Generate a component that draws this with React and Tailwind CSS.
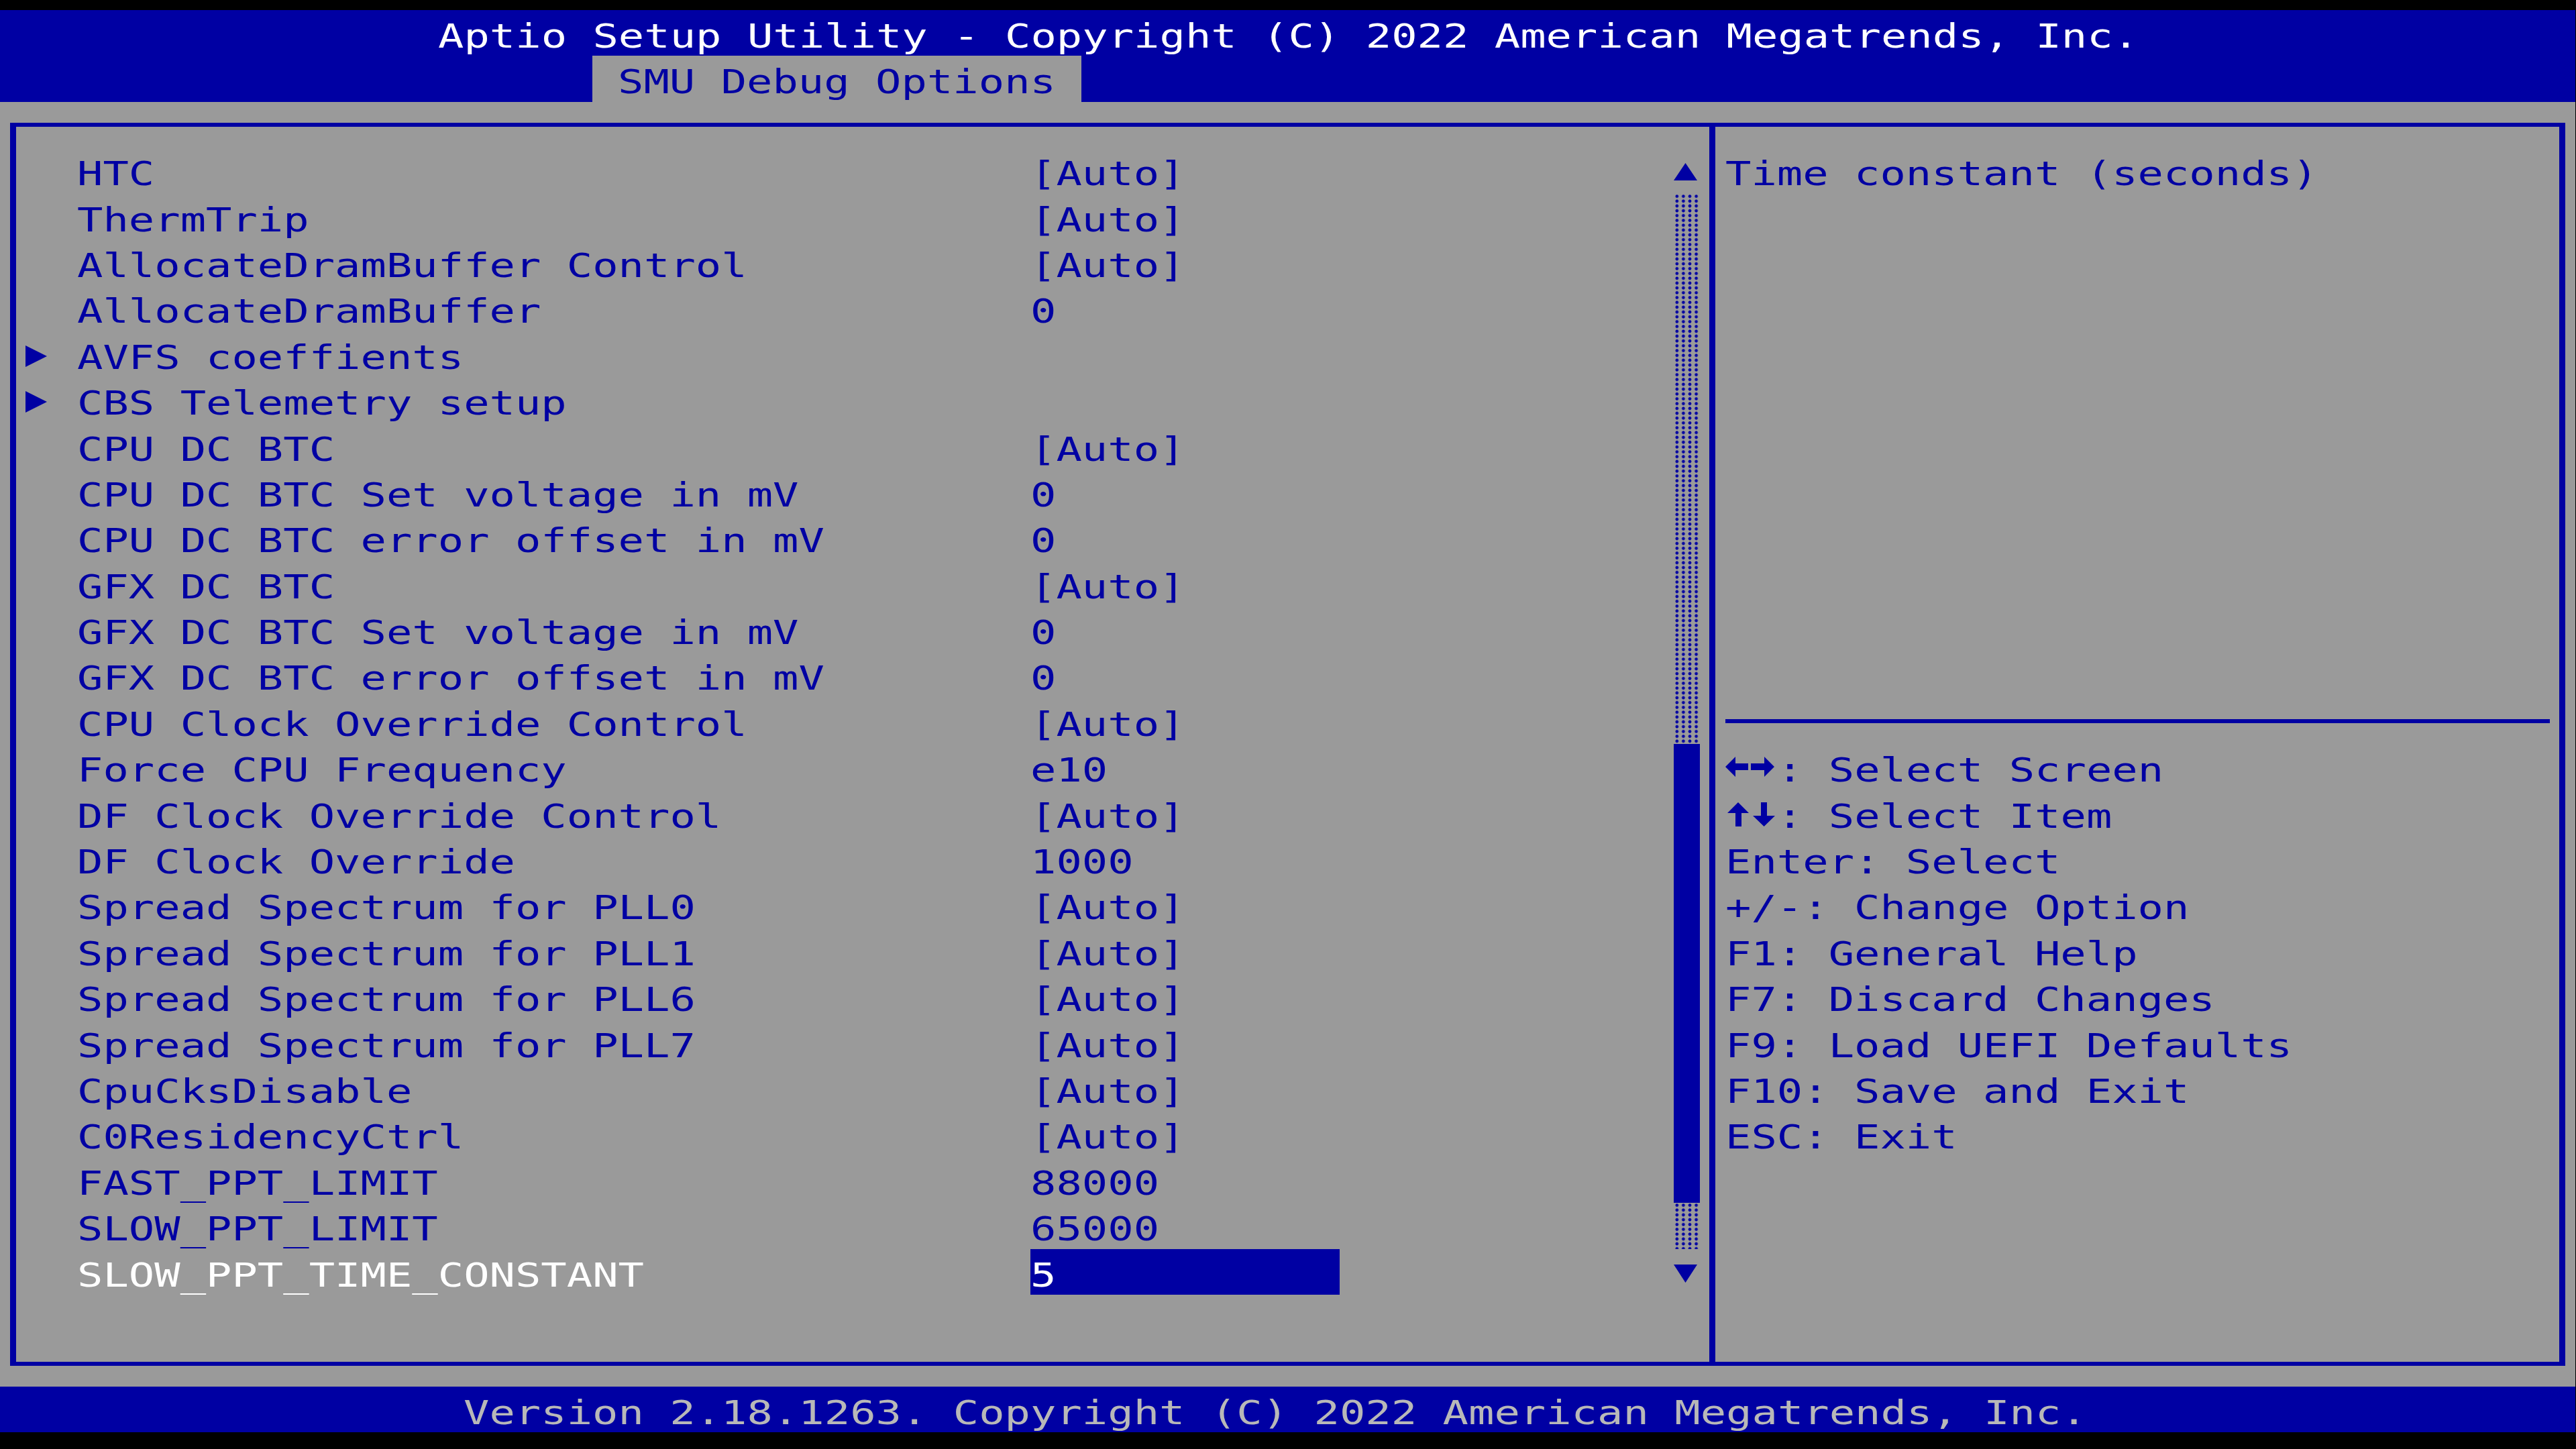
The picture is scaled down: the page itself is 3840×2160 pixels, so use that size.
// Aptio setup screen: a 100 x 31 character-cell text screen (800x600 font grid stretched to 3840x2160).
const TXT =
  "inline-block whitespace-pre origin-left scale-x-[1.302] translate-y-[6px] font-['DejaVu_Sans_Mono',monospace] text-[49px] leading-[68.4px]";

const items = [
  { label: "HTC", value: "[Auto]" },
  { label: "ThermTrip", value: "[Auto]" },
  { label: "AllocateDramBuffer Control", value: "[Auto]" },
  { label: "AllocateDramBuffer", value: "0" },
  { label: "AVFS coeffients", sub: true },
  { label: "CBS Telemetry setup", sub: true },
  { label: "CPU DC BTC", value: "[Auto]" },
  { label: "CPU DC BTC Set voltage in mV", value: "0" },
  { label: "CPU DC BTC error offset in mV", value: "0" },
  { label: "GFX DC BTC", value: "[Auto]" },
  { label: "GFX DC BTC Set voltage in mV", value: "0" },
  { label: "GFX DC BTC error offset in mV", value: "0" },
  { label: "CPU Clock Override Control", value: "[Auto]" },
  { label: "Force CPU Frequency", value: "e10" },
  { label: "DF Clock Override Control", value: "[Auto]" },
  { label: "DF Clock Override", value: "1000" },
  { label: "Spread Spectrum for PLL0", value: "[Auto]" },
  { label: "Spread Spectrum for PLL1", value: "[Auto]" },
  { label: "Spread Spectrum for PLL6", value: "[Auto]" },
  { label: "Spread Spectrum for PLL7", value: "[Auto]" },
  { label: "CpuCksDisable", value: "[Auto]" },
  { label: "C0ResidencyCtrl", value: "[Auto]" },
  { label: "FAST_PPT_LIMIT", value: "88000" },
  { label: "SLOW_PPT_LIMIT", value: "65000" },
  { label: "SLOW_PPT_TIME_CONSTANT", value: "5", selected: true },
];

const help = [
  { keys: "lr", text: ": Select Screen" },
  { keys: "ud", text: ": Select Item" },
  { text: "Enter: Select" },
  { text: "+/-: Change Option" },
  { text: "F1: General Help" },
  { text: "F7: Discard Changes" },
  { text: "F9: Load UEFI Defaults" },
  { text: "F10: Save and Exit" },
  { text: "ESC: Exit" },
];

function SubMenuArrow() {
  return (
    <svg className="h-[68.4px] w-[38.4px]" viewBox="0 0 38.4 68.4">
      <polygon points="0,21 32,37 0,53" fill="#0000a3" />
    </svg>
  );
}

function ItemRow({ item }) {
  return (
    <div className="grid h-[68.4px] shrink-0 grid-cols-[76.8px_1420.8px_1fr]">
      <div>{item.sub && <SubMenuArrow />}</div>
      <div>
        <span className={`${TXT} ${item.selected ? "text-white" : "text-[#0000a3]"}`}>{item.label}</span>
      </div>
      <div>
        {item.selected ? (
          <div className="h-[68.4px] w-[460.8px] bg-[#0000a3]">
            <span className={`${TXT} text-white`}>{item.value}</span>
          </div>
        ) : item.value ? (
          <span className={`${TXT} text-[#0000a3]`}>{item.value}</span>
        ) : null}
      </div>
    </div>
  );
}

function KeyArrows({ kind }) {
  return (
    <svg className="h-[68.4px] w-[76.8px] shrink-0" viewBox="0 0 76.8 68.4">
      {kind === "lr" ? (
        <g fill="#0000a3">
          <polygon points="0,34 15,19 15,29 34,29 34,39 15,39 15,49" />
          <polygon points="73,34 58,19 58,29 38,29 38,39 58,39 58,49" />
        </g>
      ) : (
        <g fill="#0000a3">
          <polygon points="19,18 35,34 24,34 24,54 15,54 15,34 3,34" />
          <polygon points="57.6,54 74,38 62,38 62,18 53,18 53,38 41,38" />
        </g>
      )}
    </svg>
  );
}

function ScrollBar() {
  return (
    <div className="col-start-66 row-start-4 row-end-29 flex flex-col">
      <svg className="h-[68.4px] w-[38.4px] shrink-0" viewBox="0 0 38.4 68.4">
        <polygon points="0,49 17.5,23 35,49" fill="#0000a3" />
      </svg>
      <div className="h-[820.8px] shrink-0 bg-[radial-gradient(circle,#0000a3_2px,transparent_2.7px)] bg-[length:9.6px_7.2px]" />
      <div className="h-[684px] shrink-0 bg-[#0000a3]" />
      <div className="h-[68.4px] shrink-0 bg-[radial-gradient(circle,#0000a3_2px,transparent_2.7px)] bg-[length:9.6px_7.2px]" />
      <svg className="h-[68.4px] w-[38.4px] shrink-0" viewBox="0 0 38.4 68.4">
        <polygon points="0,23 35,23 17.5,50" fill="#0000a3" />
      </svg>
    </div>
  );
}

export default function App() {
  return (
    <div className="h-[2160px] w-[3840px] overflow-hidden bg-black pt-[15px]">
      <div className="grid grid-cols-[repeat(100,38.4px)] grid-rows-[repeat(31,68.4px)]">
        {/* title bar + tab strip */}
        <div className="col-start-1 col-end-101 row-start-1 row-end-3 bg-[#0000a3]" />
        <div className="col-start-18 col-end-101 row-start-1">
          <span className={`${TXT} text-white`}>Aptio Setup Utility - Copyright (C) 2022 American Megatrends, Inc.</span>
        </div>
        <div className="col-start-24 col-end-43 row-start-2 bg-[#9a9a9a] pl-[38.4px]">
          <span className={`${TXT} text-[#0000a3]`}>SMU Debug Options</span>
        </div>

        {/* work area with its frame */}
        <div className="col-start-1 col-end-101 row-start-3 row-end-31 bg-[#9a9a9a]" />
        <div className="col-start-1 col-end-101 row-start-3 row-end-31 mx-[14.7px] my-[31.2px] border-x-[9px] border-y-[6px] border-[#0000a3]" />
        <div className="col-start-67 row-start-3 row-end-31 my-[31.2px] w-[9px] justify-self-center bg-[#0000a3]" />

        {/* settings list */}
        <div className="col-start-2 col-end-66 row-start-4 row-end-29 flex flex-col">
          {items.map((item) => (
            <ItemRow key={item.label} item={item} />
          ))}
        </div>

        <ScrollBar />

        {/* help panel */}
        <div className="col-start-68 col-end-100 row-start-4">
          <span className={`${TXT} text-[#0000a3]`}>Time constant (seconds)</span>
        </div>
        <div className="col-start-68 col-end-100 row-start-16 h-[6px] self-center bg-[#0000a3]" />
        <div className="col-start-68 col-end-100 row-start-17 row-end-26 flex flex-col">
          {help.map((h) => (
            <div key={h.text} className="flex h-[68.4px] shrink-0">
              {h.keys && <KeyArrows kind={h.keys} />}
              <span className={`${TXT} text-[#0000a3]`}>{h.text}</span>
            </div>
          ))}
        </div>

        {/* status line */}
        <div className="col-start-1 col-end-101 row-start-31 bg-[#0000a3] pl-[691.2px]">
          <span className={`${TXT} text-[#b8b8b8]`}>Version 2.18.1263. Copyright (C) 2022 American Megatrends, Inc.</span>
        </div>
      </div>
    </div>
  );
}
